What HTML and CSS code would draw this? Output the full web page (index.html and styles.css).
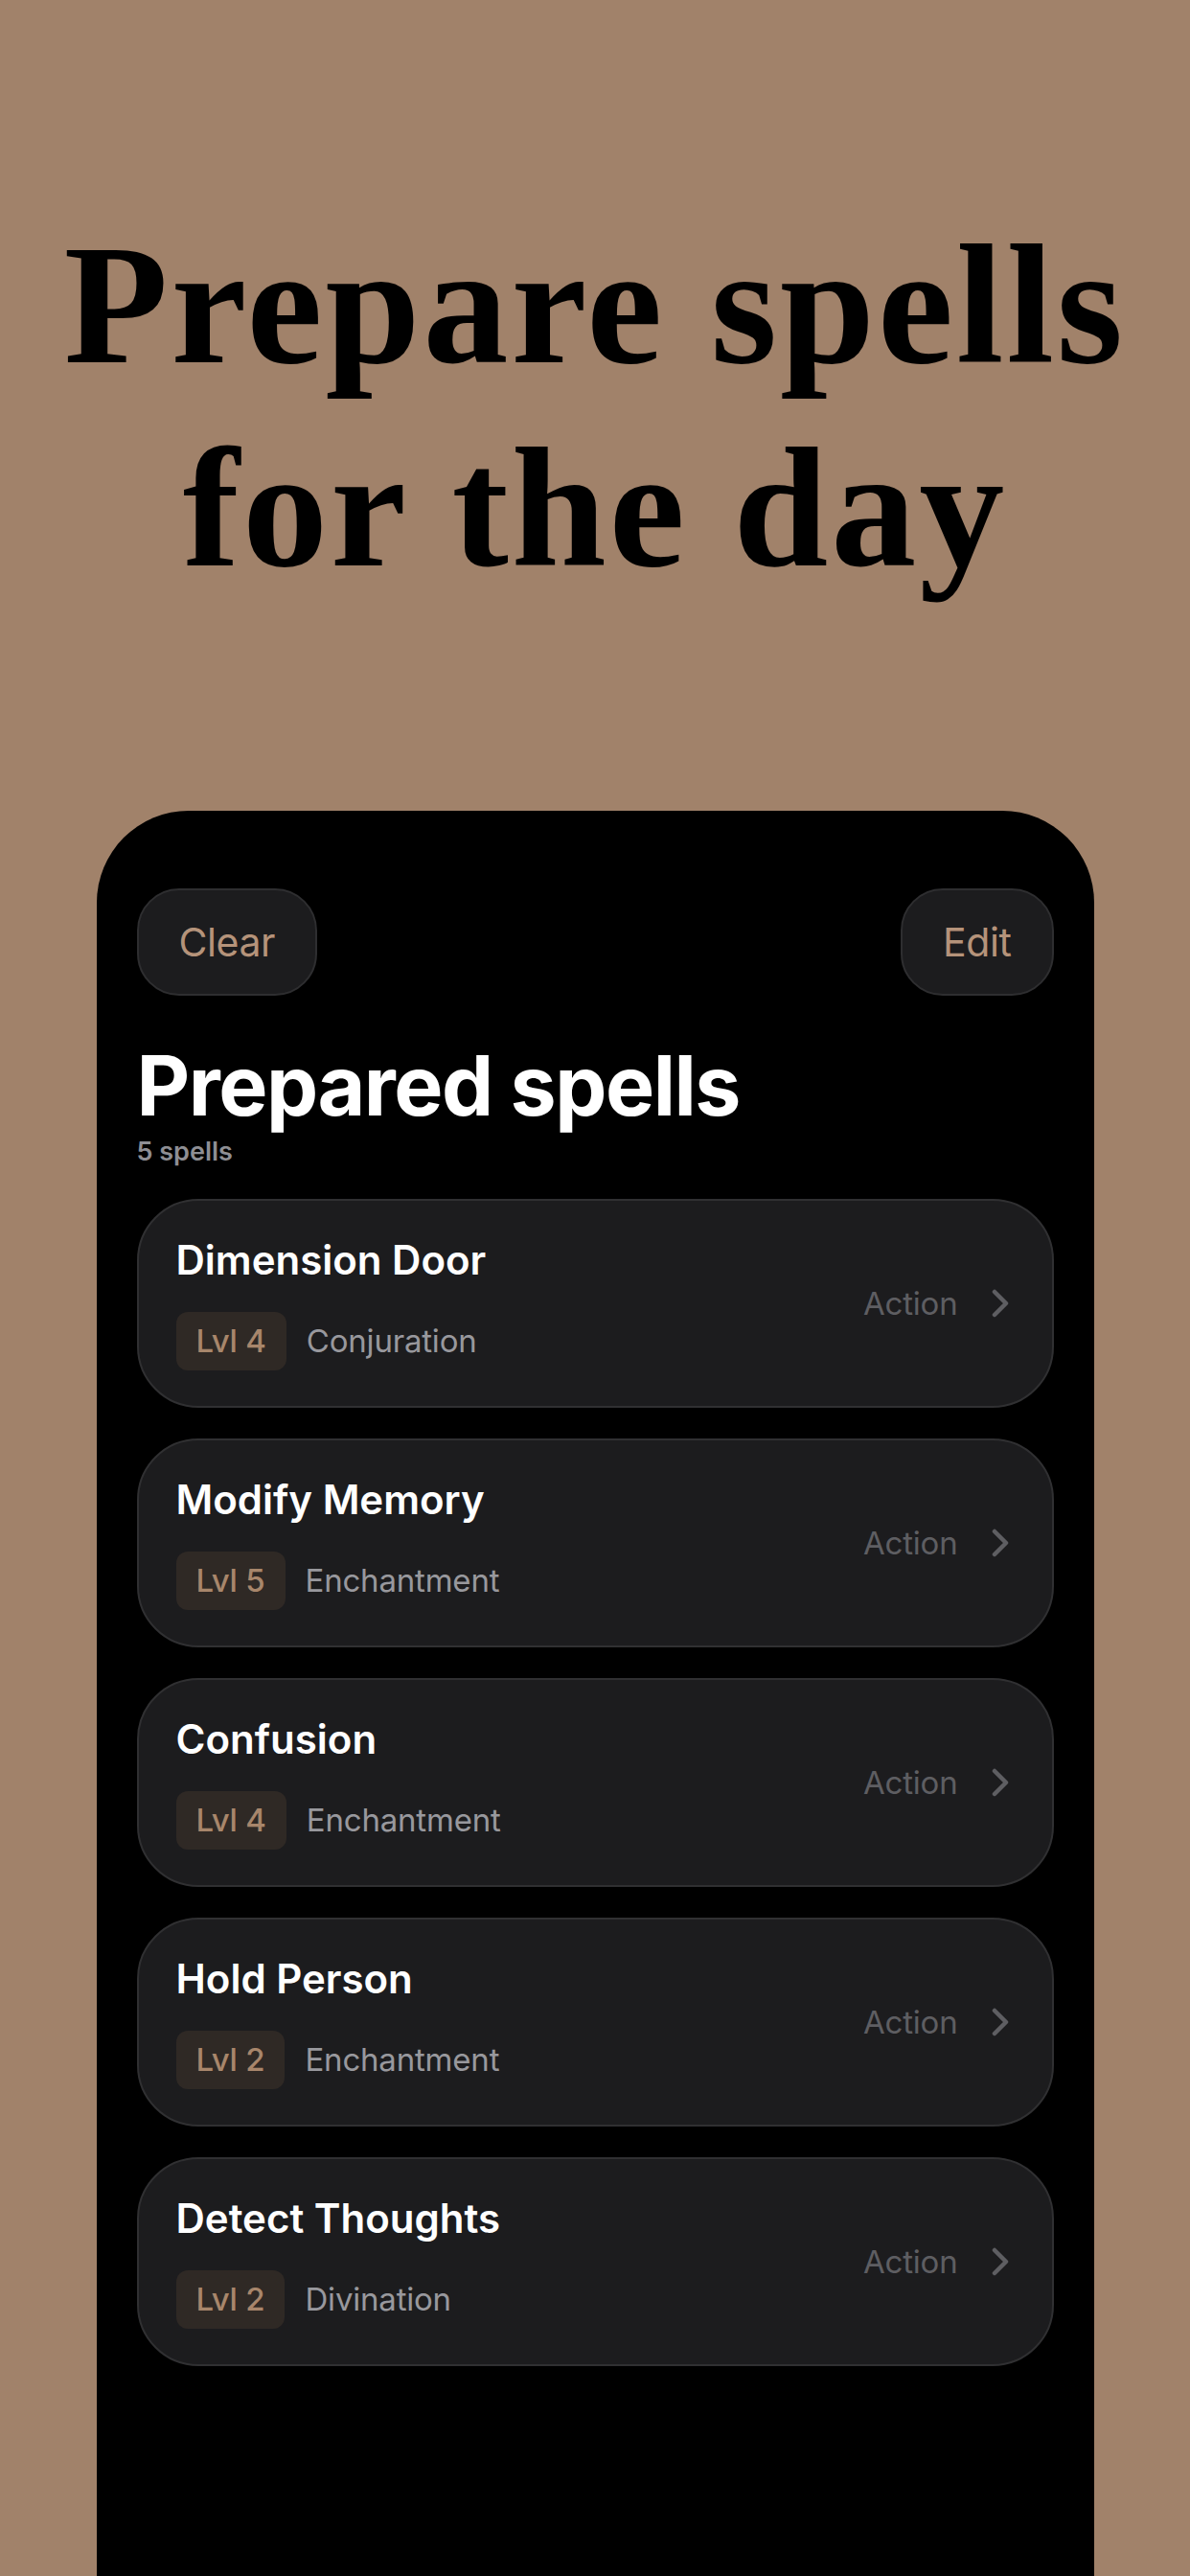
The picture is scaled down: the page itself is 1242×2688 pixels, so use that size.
FILE: index.html
```html
<!DOCTYPE html>
<html lang="en">
<head>
<meta charset="utf-8">
<title>Prepare spells for the day</title>
<link rel="stylesheet" href="styles.css">
</head>
<body>
<div class="page">
  <h1 class="headline">Prepare spells<br>for the day</h1>
  <div class="phone">
    <div class="toolbar">
      <button class="pill-btn">Clear</button>
      <button class="pill-btn">Edit</button>
    </div>
    <h2 class="title">Prepared spells</h2>
    <div class="count">5 spells</div>
    <div class="list">
      <div class="card">
        <div class="card-main">
          <div class="spell-name">Dimension Door</div>
          <div class="meta"><span class="badge">Lvl 4</span><span class="school">Conjuration</span></div>
        </div>
        <span class="action">Action</span>
        <svg class="chev" viewBox="0 0 18 30" width="18" height="30"><path d="M3 3 L15 15 L3 27" /></svg>
      </div>
      <div class="card">
        <div class="card-main">
          <div class="spell-name">Modify Memory</div>
          <div class="meta"><span class="badge">Lvl 5</span><span class="school">Enchantment</span></div>
        </div>
        <span class="action">Action</span>
        <svg class="chev" viewBox="0 0 18 30" width="18" height="30"><path d="M3 3 L15 15 L3 27" /></svg>
      </div>
      <div class="card">
        <div class="card-main">
          <div class="spell-name">Confusion</div>
          <div class="meta"><span class="badge">Lvl 4</span><span class="school">Enchantment</span></div>
        </div>
        <span class="action">Action</span>
        <svg class="chev" viewBox="0 0 18 30" width="18" height="30"><path d="M3 3 L15 15 L3 27" /></svg>
      </div>
      <div class="card">
        <div class="card-main">
          <div class="spell-name">Hold Person</div>
          <div class="meta"><span class="badge">Lvl 2</span><span class="school">Enchantment</span></div>
        </div>
        <span class="action">Action</span>
        <svg class="chev" viewBox="0 0 18 30" width="18" height="30"><path d="M3 3 L15 15 L3 27" /></svg>
      </div>
      <div class="card">
        <div class="card-main">
          <div class="spell-name">Detect Thoughts</div>
          <div class="meta"><span class="badge">Lvl 2</span><span class="school">Divination</span></div>
        </div>
        <span class="action">Action</span>
        <svg class="chev" viewBox="0 0 18 30" width="18" height="30"><path d="M3 3 L15 15 L3 27" /></svg>
      </div>
    </div>
  </div>
</div>
</body>
</html>
```
FILE: styles.css
```css
html, body {
  margin: 0;
  padding: 0;
  background: #a1826a;
}
.page {
  height: 2688px;
  overflow: hidden;
  display: flex;
  flex-direction: column;
  align-items: center;
  padding-top: 212px;
  box-sizing: border-box;
}
.headline {
  margin: 0;
  font-family: "Liberation Serif", serif;
  font-weight: 700;
  font-size: 178px;
  line-height: 212px;
  letter-spacing: 3px;
  text-align: center;
  color: #000;
}
.phone {
  margin-top: 210px;
  width: 1041px;
  flex: 1;
  box-sizing: border-box;
  background: #000;
  border-radius: 96px 96px 0 0;
  padding: 81px 42px 0;
  font-family: Inter, "Noto Sans", sans-serif;
}
.toolbar {
  display: flex;
  justify-content: space-between;
}
.pill-btn {
  height: 112px;
  padding: 0 42px;
  border-radius: 44px;
  background: #1c1c1e;
  border: 2px solid #2e2e30;
  color: #b5937a;
  font-family: Inter, "Noto Sans", sans-serif;
  font-size: 41px;
  font-weight: 400;
  letter-spacing: -0.4px;
  display: flex;
  align-items: center;
}
.title {
  margin: 54px 0 0;
  font-size: 86px;
  line-height: 80px;
  font-weight: 700;
  letter-spacing: -1.5px;
  color: #fff;
}
.count {
  margin-top: 17px;
  font-size: 27px;
  line-height: 24px;
  font-weight: 600;
  color: #8e8e93;
}
.list {
  margin-top: 37px;
  display: flex;
  flex-direction: column;
  gap: 32px;
}
.card {
  height: 218px;
  box-sizing: border-box;
  border: 2px solid #303032;
  border-radius: 64px;
  background: #1c1c1e;
  display: flex;
  align-items: center;
  padding: 0 45px 0 39px;
}
.card-main {
  flex: 1;
  display: flex;
  flex-direction: column;
  gap: 30px;
}
.spell-name {
  font-size: 42px;
  line-height: 48px;
  font-weight: 600;
  color: #fff;
  letter-spacing: 0;
}
.meta {
  display: flex;
  align-items: center;
  gap: 21px;
}
.badge {
  height: 61px;
  padding: 0 21px;
  border-radius: 12px;
  background: #2f2925;
  color: #a8866b;
  font-size: 33px;
  font-weight: 500;
  letter-spacing: -0.2px;
  display: flex;
  align-items: center;
}
.school {
  font-size: 33px;
  color: #98989d;
  letter-spacing: -0.2px;
}
.action {
  font-size: 33px;
  color: #5e5e62;
  margin-right: 35px;
  letter-spacing: -0.2px;
}
.chev {
  display: block;
}
.chev path {
  fill: none;
  stroke: #5e5e62;
  stroke-width: 4.5;
  stroke-linecap: round;
  stroke-linejoin: round;
}
```
